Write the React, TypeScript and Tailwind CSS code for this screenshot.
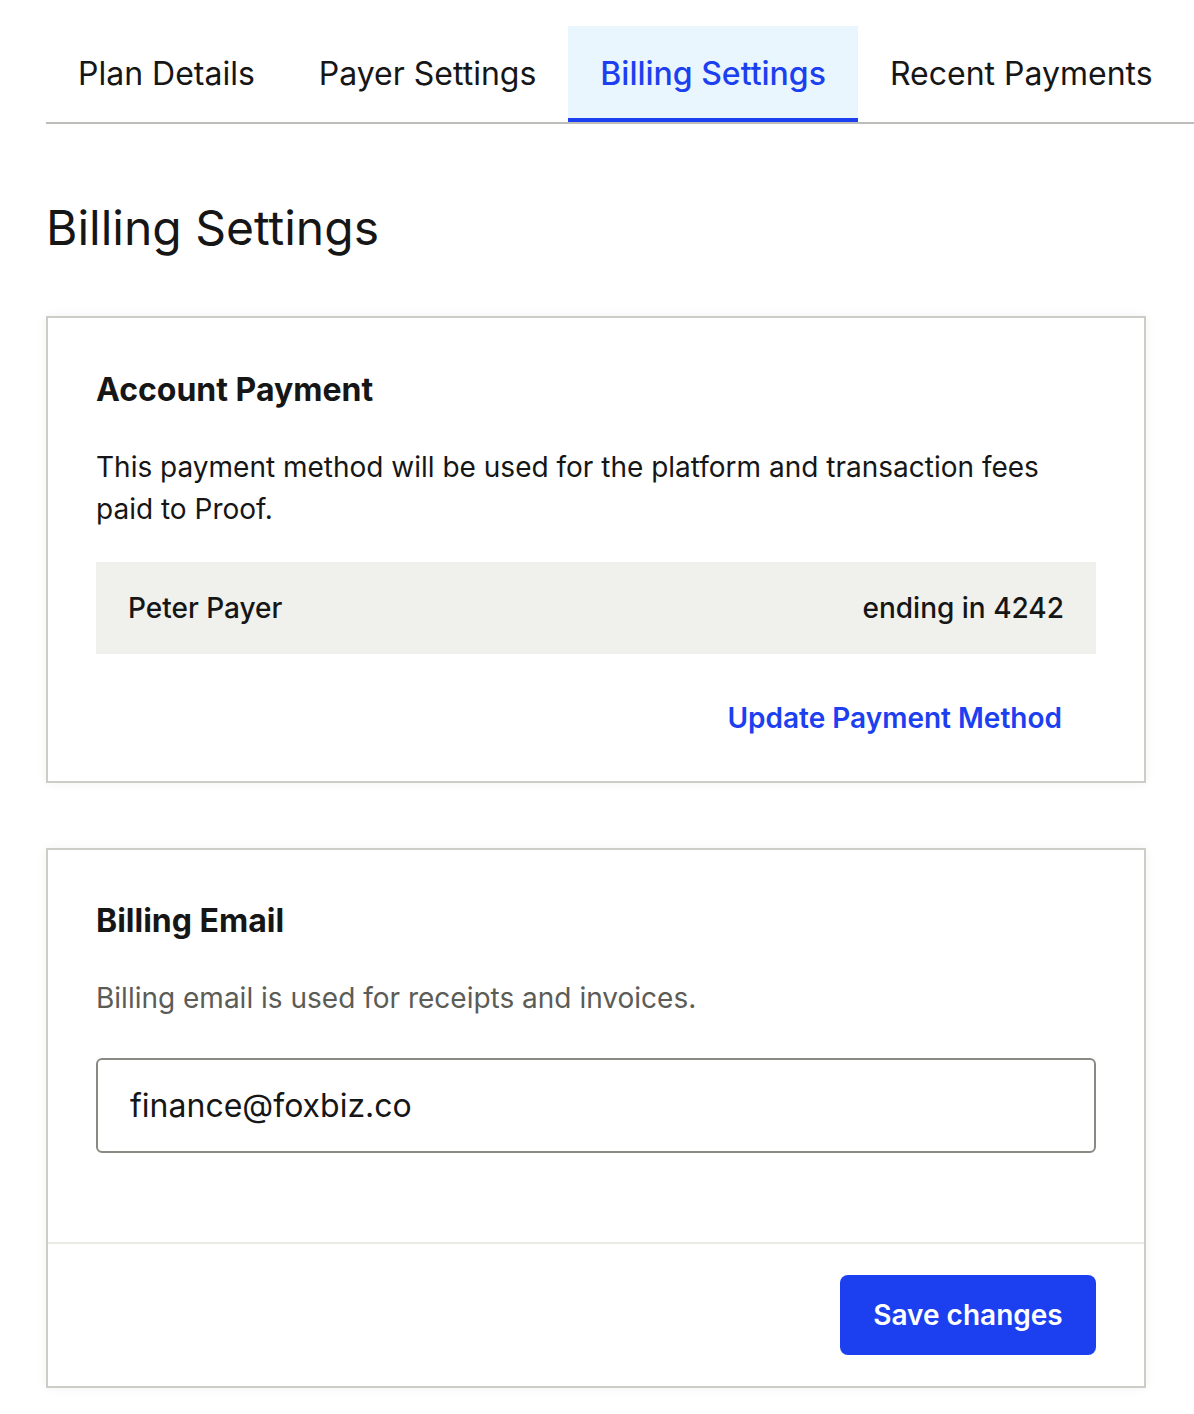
import React from "react"

const tabs = ["Plan Details", "Payer Settings", "Billing Settings", "Recent Payments"]

export default function App() {
    const active = "Billing Settings"
    return (
        <div className="min-h-[1414px] bg-white text-[#161616] font-['Inter',sans-serif] overflow-hidden">
            <div className="pt-[26px] pl-[46px]">
                <ul className="flex border-b-2 border-[#bdbdba] w-[1200px]">
                    {tabs.map((tab) => (
                        <li key={tab}>
                            <a
                                href="#"
                                className={
                                    tab === active
                                        ? "flex items-center h-[96px] px-8 pt-1 border-b-4 border-[#1c40f0] bg-[#eaf6fd] text-[#1c40f0] text-[32px] font-medium whitespace-nowrap"
                                        : "flex items-center h-[96px] px-8 pt-1 border-b-4 border-transparent text-[#161616] text-[32px] whitespace-nowrap"
                                }
                            >
                                {tab}
                            </a>
                        </li>
                    ))}
                </ul>
            </div>

            <div className="ml-[46px] w-[1100px]">
                <h1 className="mt-[75px] text-[48px] leading-[58px] font-normal">Billing Settings</h1>

                <section className="mt-[59px] border-2 border-[#cdcdc7] shadow-[0_0_10px_rgba(0,0,0,0.06)] px-12 pt-[50px] pb-[43px]">
                    <h2 className="text-[32px] leading-[44px] font-bold">Account Payment</h2>
                    <p className="mt-[34px] text-[28px] leading-[42px]">
                        This payment method will be used for the platform and transaction fees paid to Proof.
                    </p>
                    <div className="mt-8 h-[92px] bg-[#f0f0ec] px-8 flex items-center justify-between text-[28px] font-medium">
                        <span>Peter Payer</span>
                        <span>ending in 4242</span>
                    </div>
                    <div className="mt-11 flex justify-end pr-[34px]">
                        <a href="#" className="text-[28px] leading-[40px] font-semibold text-[#1c40f0]">
                            Update Payment Method
                        </a>
                    </div>
                </section>

                <section className="mt-[65px] border-2 border-[#cdcdc7] shadow-[0_0_10px_rgba(0,0,0,0.06)] mb-6">
                    <div className="px-12 pt-[49px] pb-[89px]">
                        <h2 className="text-[32px] leading-[44px] font-bold">Billing Email</h2>
                        <p className="mt-[34px] text-[28px] leading-[42px] text-[#5c5c57]">
                            Billing email is used for receipts and invoices.
                        </p>
                        <input
                            className="mt-[39px] w-full h-[95px] rounded-md border-2 border-[#8a8a85] px-8 text-[32px] text-[#161616] outline-none"
                            type="email"
                            defaultValue="finance@foxbiz.co"
                        />
                    </div>
                    <div className="border-t-2 border-[#ebebe6] px-12 pt-[31px] pb-[31px] flex justify-end">
                        <button className="w-[256px] h-[80px] rounded-lg bg-[#1c40f0] text-white text-[28px] font-semibold">
                            Save changes
                        </button>
                    </div>
                </section>
            </div>
        </div>
    )
}
